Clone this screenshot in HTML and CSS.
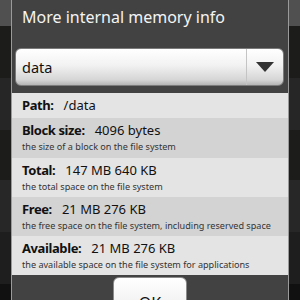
FILE: index.html
```html
<!DOCTYPE html>
<html lang="en">
<head>
    <meta charset="UTF-8">
    <meta name="viewport" content="width=device-width, initial-scale=1.0">
    <title>More internal memory info</title>
    <link rel="stylesheet" href="styles.css">
</head>
<body>
    <div class="dialog">
        <div class="dialog-title">More internal memory info</div>

        <div class="spinner-area">
            <div class="spinner">
                <div class="spinner-text">data</div>
                <div class="spinner-arrow"><span class="triangle"></span></div>
            </div>
        </div>

        <div class="info-list">
            <div class="info-row light path-row">
                <span class="label">Path:</span><span class="value">/data</span>
            </div>
            <div class="info-row dark block-row">
                <div><span class="label">Block size:</span><span class="value">4096 bytes</span></div>
                <div class="desc">the size of a block on the file system</div>
            </div>
            <div class="info-row light">
                <div><span class="label">Total:</span><span class="value">147 MB 640 KB</span></div>
                <div class="desc">the total space on the file system</div>
            </div>
            <div class="info-row dark">
                <div><span class="label">Free:</span><span class="value">21 MB 276 KB</span></div>
                <div class="desc">the free space on the file system, including reserved space</div>
            </div>
            <div class="info-row light">
                <div><span class="label">Available:</span><span class="value">21 MB 276 KB</span></div>
                <div class="desc">the available space on the file system for applications</div>
            </div>
        </div>

        <div class="button-bar">
            <button class="ok-button">OK</button>
        </div>
    </div>
</body>
</html>
```

FILE: styles.css
```css
body {
    margin: 0;
    width: 300px;
    height: 300px;
    overflow: hidden;
    font-family: 'Noto Sans', 'Open Sans', sans-serif;
    background: linear-gradient(to bottom,
        #505050 0, #505050 26px,
        #1c1c1a 26px, #1c1c1a 78px,
        #262626 78px, #262626 130px,
        #1c1c1a 130px, #1c1c1a 180px,
        #272727 180px, #272727 232px,
        #1e1e1e 232px, #1e1e1e 284px,
        #111 284px);
}

.dialog {
    margin: 0 11px;
    border-left: 1px solid #9a9a9a;
    border-right: 1px solid #9a9a9a;
    background: #424242;
    height: 300px;
    overflow: hidden;
}

.dialog-title {
    height: 44px;
    padding: 1px 0 0 10px;
    color: #f4f4f4;
    font-size: 16px;
    line-height: 32px;
    white-space: nowrap;
}

.spinner-area {
    padding: 3px 4px 7px 3px;
}

.spinner {
    display: flex;
    height: 36px;
    border: 1px solid #7a7a7a;
    border-radius: 6px;
    background: linear-gradient(to bottom, #ffffff 0%, #f2f2f2 45%, #d6d6d6 85%, #b4b4b4 100%);
}

.spinner-text {
    flex: 1;
    padding-left: 6px;
    font-size: 14.5px;
    line-height: 36px;
    color: #111;
}

.spinner-arrow {
    width: 36px;
    border-left: 1px solid #c4c4c4;
    display: flex;
    align-items: center;
    justify-content: center;
}

.triangle {
    width: 0;
    height: 0;
    border-left: 9px solid transparent;
    border-right: 9px solid transparent;
    border-top: 10px solid #333;
}

.info-row {
    padding: 2px 10px 3px;
    color: #111;
    font-size: 13px;
    line-height: 20px;
    white-space: nowrap;
}

.info-row.light {
    background: #e4e4e4;
}

.info-row.dark {
    background: #d3d3d3;
}

.path-row {
    height: 20px;
}

.block-row {
    padding-bottom: 4px;
}

.label {
    font-weight: bold;
    letter-spacing: -0.4px;
    margin-right: 10px;
}

.desc {
    font-size: 9.1px;
    line-height: 14px;
    color: #333;
}

.button-bar {
    display: flex;
    justify-content: center;
    padding-top: 2px;
}

.ok-button {
    width: 74px;
    height: 40px;
    border: 1px solid #8a8a8a;
    border-radius: 6px;
    background: linear-gradient(to bottom, #ffffff, #ececec);
    font-family: 'Noto Sans', 'Open Sans', sans-serif;
    font-size: 16px;
    color: #111;
    padding: 12px 0 0;
    line-height: 22px;
    vertical-align: top;
}
```
